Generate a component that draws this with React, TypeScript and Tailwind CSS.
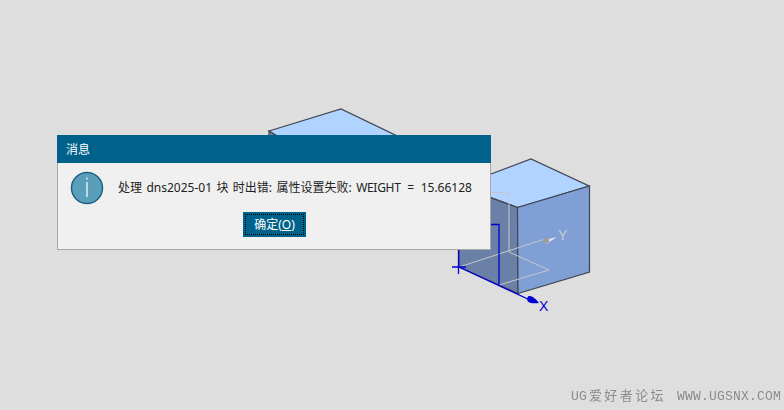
export default function App() {
  const line = "#404652";
  return (
    <div className="relative w-[784px] h-[410px] overflow-hidden bg-[#dedede] [font-family:'Noto_Sans','Noto_Sans_CJK_SC',sans-serif]">
      <svg className="absolute inset-0" width="784" height="410" viewBox="0 0 784 410" fill="none">
        {/* back cube */}
        <path d="M269 131 L341 109 L420 147 L340 175 Z" fill="#b0d4ff" stroke={line} strokeWidth="1.2" />
        <path d="M269 131 L277 136 L269 140 Z" fill="#6a82a8" stroke={line} strokeWidth="1.2" />
        {/* front cube */}
        <path d="M459 186 L531 159 L589 186 L517.5 207.5 Z" fill="#b0d4ff" stroke={line} strokeWidth="1.2" />
        <path d="M459 186 L517.5 207.5 L518 293.5 L459 267 Z" fill="#6a80a6" stroke={line} strokeWidth="1.2" />
        <path d="M517.5 207.5 L589.5 186 L589.5 272 L518 293.5 Z" fill="#7f9fd5" stroke={line} strokeWidth="1.2" />
        {/* gray WCS */}
        <g stroke="#c4c8ce" strokeWidth="1">
          <path d="M491 192.5 H509 V252 L549 270 L499 285" />
          <path d="M459 267 L545 239" />
        </g>
        <path d="M545 240 L557 237 L546 244 Z" fill="#e8e8e8" />
        <circle cx="546" cy="240.5" r="3" fill="#9a9ea4" />
        <text x="558" y="240" fontSize="14" fill="#c8ccd2" fontFamily="Liberation Sans">Y</text>
        {/* blue WCS */}
        <g stroke="#0000d4" strokeWidth="1.3">
          <path d="M452 267 H466 M458.5 250 V274" />
          <path d="M459 267 L532 301" />
          <path d="M491 224.5 H499 V285" />
        </g>
        <path d="M528 296.5 C531 295 535 298 539 303 C534 303.5 529 303.5 527.5 301 C527 299.5 527 298 528 296.5 Z" fill="#0000d4" />
        <text x="539" y="311" fontSize="14" fill="#0000d4" fontFamily="Liberation Sans">X</text>
      </svg>

      <div className="absolute left-[57px] top-[135px] w-[434px] h-[115px] flex flex-col bg-[#f0f0f0] border-x border-b border-[#a8a8a8]">
        <div className="h-[28px] -mx-px bg-[#00628b] text-white text-[12px] leading-[30px] pl-[9px]">消息</div>
        <div className="flex items-center h-[50px] pl-[12px] gap-[14px]">
          <svg width="34" height="34" viewBox="0 0 34 34" className="shrink-0">
            <circle cx="17" cy="17" r="15.5" fill="#5a9fba" stroke="#1f6484" strokeWidth="1.5" />
            <path d="M17 6.5 V8.5 M17 11 V26" stroke="#ffffff" strokeWidth="1.2" />
          </svg>
          <span className="text-[12px] whitespace-pre text-[#222] [word-spacing:1.3px]">
            处理 dns2025-01 块 时出错: 属性设置失败: <span className="tracking-[-0.3px]">WEIGHT</span>
            <span className="[word-spacing:3.5px]"> = </span>15.66128
          </span>
        </div>
        <div className="flex justify-center pl-[1px] -mt-px">
          <div className="w-[63px] h-[25px] p-[2px] bg-[#00628b]">
            <div className="w-full h-full border border-dotted border-black flex items-center justify-center text-[12px] text-white">
              确定(<span className="underline">O</span>)
            </div>
          </div>
        </div>
      </div>

      <div className="absolute right-[3px] bottom-[6px] flex text-[13px] leading-[14px] text-[#8c8c8c] blur-[0.3px] [font-family:'Liberation_Mono','Noto_Sans_CJK_SC',monospace] whitespace-pre tracking-[0.2px]">
        <span>UG</span>
        <span className="tracking-[2.4px] ml-[2px]">爱好者论坛</span>
        <span className="ml-[11px]">WWW.UGSNX.COM</span>
      </div>
    </div>
  );
}
